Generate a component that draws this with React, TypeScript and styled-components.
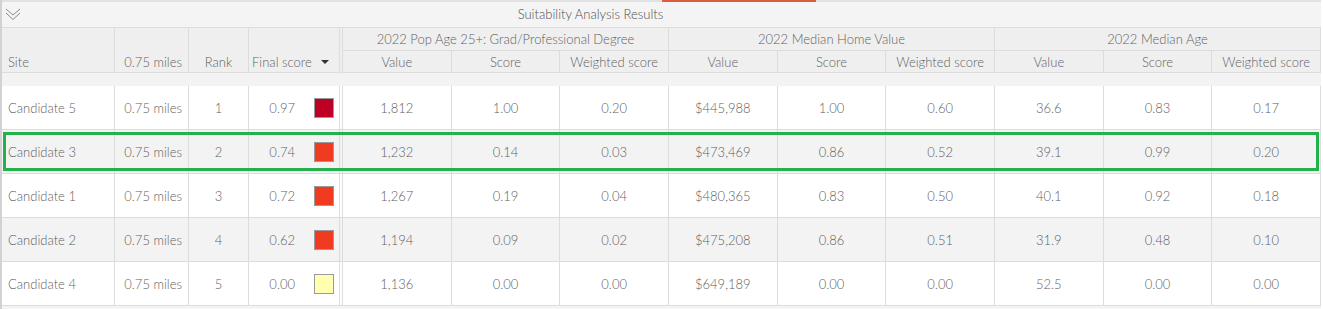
import React from 'react';
import styled, { createGlobalStyle, css } from 'styled-components';

const GlobalStyle = createGlobalStyle`
    html, body {
        margin: 0;
        padding: 0;
        background: #ffffff;
    }
    body {
        font-family: "Lato", "Noto Sans", "Liberation Sans", sans-serif;
        font-size: 13px;
        font-weight: 300;
        color: #5f5f5f;
    }
`;

const COLUMNS = '113px 74px 60px 94px repeat(9, 1fr)';

const Panel = styled.div`
    width: 1321px;
    height: 309px;
    border-left: 2px solid #d2d2d2;
    box-sizing: border-box;
    background-color: #f4f4f4;
    overflow: hidden;
`;

const Strip = styled.div`
    height: 2px;
    background-color: #e2e2e2;
    display: flex;
`;

const StripAccent = styled.div`
    width: 154px;
    margin-left: 660px;
    background-color: #dd5d3e;
`;

const TitleBar = styled.div`
    height: 26px;
    padding-right: 142px;
    padding-bottom: 2px;
    border-bottom: 1px solid #dcdcdc;
    box-sizing: border-box;
    background-color: #f4f4f4;
    display: flex;
    align-items: center;
`;

const CollapseButton = styled.button`
    width: 22px;
    height: 22px;
    padding: 0 0 0 3px;
    margin-top: 2px;
    border: 0;
    background: none;
    display: flex;
    align-items: center;
    cursor: pointer;
`;

const Title = styled.div`
    flex: 1;
    text-align: center;
    color: #4f4f4f;
    margin-left: -22px;
`;

const Header = styled.div`
    display: grid;
    grid-template-columns: ${COLUMNS};
    grid-template-rows: 23px 22px;
    background-color: #efefef;
`;

const cellBorder = css<{ $double?: boolean }>`
    border-right: ${p => (p.$double ? '4px double #dcdcdc' : '1px solid #dcdcdc')};
    box-sizing: border-box;
`;

const HeadCell = styled.div<{ $align?: string; $double?: boolean; $pad?: number }>`
    ${cellBorder};
    grid-row: 1 / 3;
    border-bottom: 1px solid #dcdcdc;
    display: flex;
    align-items: flex-end;
    justify-content: ${p => p.$align || 'flex-start'};
    padding: 0 ${p => (p.$align === 'flex-end' ? '6px' : '0')} 2px ${p => p.$pad ?? 6}px;
`;

const SortCaret = styled.span`
    margin-left: auto;
    margin-right: 10px;
    margin-bottom: 6px;
    width: 0;
    height: 0;
    border-left: 4px solid transparent;
    border-right: 4px solid transparent;
    border-top: 4px solid #333;
`;

const GroupCell = styled.div`
    grid-column: span 3;
    border-right: 1px solid #dcdcdc;
    border-bottom: 1px solid #dcdcdc;
    box-sizing: border-box;
    display: flex;
    align-items: center;
    justify-content: center;
`;

const SubCell = styled.div`
    border-right: 1px solid #dcdcdc;
    border-bottom: 1px solid #dcdcdc;
    box-sizing: border-box;
    display: flex;
    align-items: center;
    justify-content: center;
`;

const Spacer = styled.div`
    height: 13px;
    background-color: #f3f3f3;
`;

const Row = styled.div<{ $striped?: boolean; $selected?: boolean }>`
    position: relative;
    display: grid;
    grid-template-columns: ${COLUMNS};
    height: 44px;
    border-bottom: 1px solid #dcdcdc;
    box-sizing: border-box;
    background-color: ${p => (p.$striped ? '#f3f3f3' : '#ffffff')};

    ${p => p.$selected && css`
        &::after {
            content: '';
            position: absolute;
            top: 2px;
            left: 1px;
            right: 2px;
            bottom: 2px;
            border: 3px solid #25b04b;
            pointer-events: none;
        }
    `}
`;

const Cell = styled.div<{ $align?: string; $double?: boolean }>`
    ${cellBorder};
    display: flex;
    align-items: center;
    justify-content: ${p => p.$align || 'center'};
    padding: 0 6px;
    white-space: nowrap;
`;

const ScoreCell = styled.div`
    ${cellBorder};
    display: flex;
    align-items: center;
    justify-content: flex-end;
    gap: 19px;
    padding-right: 5px;
`;

const Swatch = styled.span<{ $color: string }>`
    width: 20px;
    height: 20px;
    box-sizing: border-box;
    border: 1px solid #9a9a9a;
    background-color: ${p => p.$color};
`;

const ChevronIcon = () => (
    <svg width="16" height="13" viewBox="0 0 16 13" fill="none" stroke="#8a8a8a" strokeWidth="1">
        <polyline points="1,1 8,7 15,1" />
        <polyline points="1,5 8,11.5 15,5" />
    </svg>
);

type Candidate = {
    site: string;
    rank: number;
    score: string;
    color: string;
    values: string[];
};

const candidates: Candidate[] = [
    { site: 'Candidate 5', rank: 1, score: '0.97', color: '#bd0026', values: ['1,812', '1.00', '0.20', '$445,988', '1.00', '0.60', '36.6', '0.83', '0.17'] },
    { site: 'Candidate 3', rank: 2, score: '0.74', color: '#f03b20', values: ['1,232', '0.14', '0.03', '$473,469', '0.86', '0.52', '39.1', '0.99', '0.20'] },
    { site: 'Candidate 1', rank: 3, score: '0.72', color: '#f03b20', values: ['1,267', '0.19', '0.04', '$480,365', '0.83', '0.50', '40.1', '0.92', '0.18'] },
    { site: 'Candidate 2', rank: 4, score: '0.62', color: '#f03b20', values: ['1,194', '0.09', '0.02', '$475,208', '0.86', '0.51', '31.9', '0.48', '0.10'] },
    { site: 'Candidate 4', rank: 5, score: '0.00', color: '#ffffb2', values: ['1,136', '0.00', '0.00', '$649,189', '0.00', '0.00', '52.5', '0.00', '0.00'] },
];

const groups = [
    '2022 Pop Age 25+: Grad/Professional Degree',
    '2022 Median Home Value',
    '2022 Median Age',
];

const SELECTED_SITE = 'Candidate 3';

const App = () => {
    return (
        <>
            <GlobalStyle />
            <Panel>
                <Strip>
                    <StripAccent />
                </Strip>
                <TitleBar>
                    <CollapseButton aria-label="Collapse">
                        <ChevronIcon />
                    </CollapseButton>
                    <Title>Suitability Analysis Results</Title>
                </TitleBar>
                <Header>
                    <HeadCell>Site</HeadCell>
                    <HeadCell $align="flex-end">0.75 miles</HeadCell>
                    <HeadCell $align="center" $pad={0}>Rank</HeadCell>
                    <HeadCell $double $pad={3}>
                        Final score
                        <SortCaret />
                    </HeadCell>
                    {groups.map(g => (
                        <GroupCell key={g}>{g}</GroupCell>
                    ))}
                    {groups.map(g =>
                        ['Value', 'Score', 'Weighted score'].map(s => (
                            <SubCell key={g + s}>{s}</SubCell>
                        ))
                    )}
                </Header>
                <Spacer />
                {candidates.map((c, i) => (
                    <Row key={c.site} $striped={i % 2 === 1} $selected={c.site === SELECTED_SITE}>
                        <Cell $align="flex-start">{c.site}</Cell>
                        <Cell $align="flex-end">0.75 miles</Cell>
                        <Cell>{c.rank}</Cell>
                        <ScoreCell $double>
                            {c.score}
                            <Swatch $color={c.color} />
                        </ScoreCell>
                        {c.values.map((v, j) => (
                            <Cell key={j}>{v}</Cell>
                        ))}
                    </Row>
                ))}
            </Panel>
        </>
    );
};

export default App;
